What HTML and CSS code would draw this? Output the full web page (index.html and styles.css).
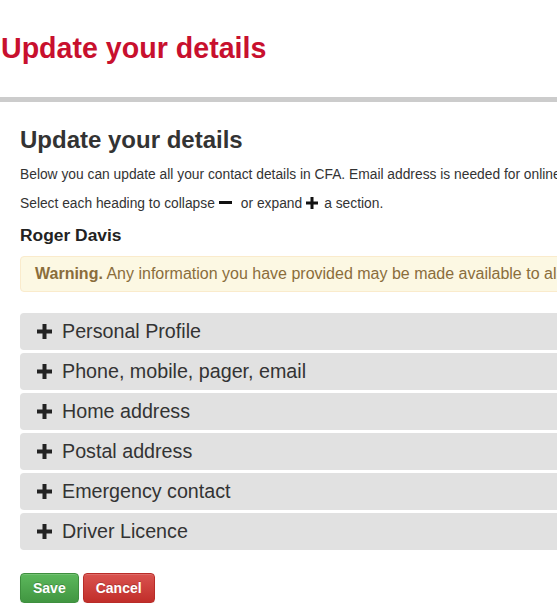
FILE: index.html
```html
<!DOCTYPE html>
<html lang="en">
<head>
<meta charset="utf-8">
<title>Update your details</title>
<link rel="stylesheet" href="styles.css">
</head>
<body>
<header class="site-header">
  <h1 class="site-title">Update your details</h1>
</header>
<main class="content">
  <h2 class="page-title">Update your details</h2>
  <p class="intro">Below you can update all your contact details in CFA. Email address is needed for online services and notifications from the brigade.</p>
  <p class="intro">Select each heading to collapse<svg class="glyph-minus" viewBox="0 0 13 13" width="13" height="13"><rect x="0" y="5" width="13" height="3" fill="#111"/></svg>or expand<svg class="glyph-small" viewBox="0 0 12 12" width="12" height="12"><rect x="0" y="4.5" width="12" height="3" fill="#111"/><rect x="4.5" y="0" width="3" height="12" fill="#111"/></svg>a section.</p>
  <h3 class="member-name">Roger Davis</h3>
  <div class="alert-warning"><strong>Warning.</strong> Any information you have provided may be made available to all members of your brigade and group.</div>
  <div class="panels">
    <div class="panel-heading"><svg class="glyph-plus" viewBox="0 0 15 15" width="15" height="15"><rect x="0" y="5.5" width="15" height="4" fill="#222"/><rect x="5.5" y="0" width="4" height="15" fill="#222"/></svg><span>Personal Profile</span></div>
    <div class="panel-heading"><svg class="glyph-plus" viewBox="0 0 15 15" width="15" height="15"><rect x="0" y="5.5" width="15" height="4" fill="#222"/><rect x="5.5" y="0" width="4" height="15" fill="#222"/></svg><span>Phone, mobile, pager, email</span></div>
    <div class="panel-heading"><svg class="glyph-plus" viewBox="0 0 15 15" width="15" height="15"><rect x="0" y="5.5" width="15" height="4" fill="#222"/><rect x="5.5" y="0" width="4" height="15" fill="#222"/></svg><span>Home address</span></div>
    <div class="panel-heading"><svg class="glyph-plus" viewBox="0 0 15 15" width="15" height="15"><rect x="0" y="5.5" width="15" height="4" fill="#222"/><rect x="5.5" y="0" width="4" height="15" fill="#222"/></svg><span>Postal address</span></div>
    <div class="panel-heading"><svg class="glyph-plus" viewBox="0 0 15 15" width="15" height="15"><rect x="0" y="5.5" width="15" height="4" fill="#222"/><rect x="5.5" y="0" width="4" height="15" fill="#222"/></svg><span>Emergency contact</span></div>
    <div class="panel-heading"><svg class="glyph-plus" viewBox="0 0 15 15" width="15" height="15"><rect x="0" y="5.5" width="15" height="4" fill="#222"/><rect x="5.5" y="0" width="4" height="15" fill="#222"/></svg><span>Driver Licence</span></div>
  </div>
  <div class="actions">
    <button class="btn btn-save" type="button">Save</button>
    <button class="btn btn-cancel" type="button">Cancel</button>
  </div>
</main>
</body>
</html>
```
FILE: styles.css
```css
html, body {
  margin: 0;
  padding: 0;
  background: #fff;
  overflow: hidden;
}
body {
  font-family: "Liberation Sans", Arial, sans-serif;
  color: #333;
  width: 1100px;
}
.site-header {
  padding: 32px 0 33px 1px;
  border-bottom: 5px solid #ccc;
}
.site-title {
  margin: 0;
  font-size: 28.6px;
  line-height: 32px;
  font-weight: bold;
  color: #c8102e;
}
.content {
  padding: 24px 0 0 20px;
}
.page-title {
  margin: 0 0 11px;
  font-size: 24px;
  line-height: 28px;
  font-weight: bold;
  color: #333;
}
.intro {
  margin: 0 0 10px;
  font-size: 13.8px;
  line-height: 19px;
  white-space: nowrap;
}
.glyph-minus {
  vertical-align: -1px;
  margin: 0 9px 0 4px;
}
.glyph-small {
  vertical-align: -1px;
  margin: 0 6px 0 4px;
}
.member-name {
  margin: 12px 0 11px;
  font-size: 17.4px;
  line-height: 20px;
  font-weight: bold;
  color: #222;
}
.alert-warning {
  padding: 8px 14px;
  font-size: 16px;
  line-height: 18px;
  color: #8a6d3b;
  background: #fcf8e3;
  border: 1px solid #faebcc;
  border-radius: 4px;
  white-space: nowrap;
}
.panels {
  margin-top: 21px;
  display: flex;
  flex-direction: column;
  gap: 3px;
}
.panel-heading {
  height: 37px;
  display: flex;
  align-items: center;
  gap: 10px;
  padding-left: 17px;
  background: #e1e1e1;
  border-radius: 4px;
  font-size: 19.7px;
  color: #333;
}
.glyph-plus {
  flex: none;
}
.actions {
  margin-top: 23px;
  display: flex;
  gap: 4px;
}
.btn {
  height: 30px;
  padding: 0 12px;
  font-family: "Liberation Sans", Arial, sans-serif;
  font-size: 14px;
  font-weight: bold;
  color: #fff;
  border-radius: 4px;
  text-shadow: 0 -1px 0 rgba(0,0,0,0.2);
  box-shadow: inset 0 1px 0 rgba(255,255,255,0.15), 0 1px 1px rgba(0,0,0,0.075);
  cursor: pointer;
}
.btn-save {
  background: linear-gradient(to bottom, #5cb85c 0%, #419641 100%);
  border: 1px solid #3e8f3e;
}
.btn-cancel {
  background: linear-gradient(to bottom, #d9534f 0%, #c12e2a 100%);
  border: 1px solid #b92c28;
}
```
